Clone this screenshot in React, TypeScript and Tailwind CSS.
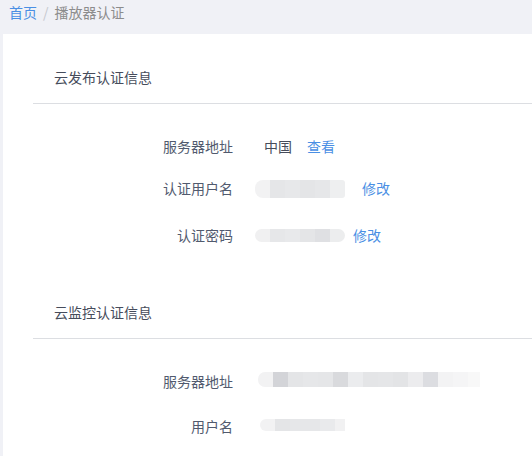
import React from "react";

const font = { fontFamily: '"Noto Sans CJK SC", "Noto Sans", sans-serif' };

function Blur({ blocks, h, round }: { blocks: string[]; h: string; round: string }) {
    return (
        <div className={`flex overflow-hidden ${h} ${round}`}>
            {blocks.map((c, i) => (
                <div key={i} className="w-[15px] h-full shrink-0" style={{ background: c }} />
            ))}
        </div>
    );
}

function Row({ label, mt, children }: { label: string; mt: string; children: React.ReactNode }) {
    return (
        <div className={`flex items-center h-[34px] ${mt}`}>
            <div className="w-[200px] text-right text-[#515a6e]">{label}</div>
            {children}
        </div>
    );
}

export default function App() {
    return (
        <div className="w-[532px] h-[456px] overflow-hidden bg-[#f0f1f6] text-[14px]" style={font}>
            <div className="h-[24px] leading-[24px] pl-[9px] flex gap-[6px]">
                <span className="text-[#4a8fe4]">首页</span>
                <span className="text-[#c5c8ce]">/</span>
                <span className="text-[#8c8c8c]">播放器认证</span>
            </div>
            <div className="mt-[10px] ml-[3px] bg-white h-[422px] pl-[30px]">
                <div className="pt-[33px] pl-[21px] h-[53px] mb-[16px] leading-[20px] text-[#464c5b]">云发布认证信息</div>
                <div className="h-px bg-[#dcdee2]" />
                <Row label="服务器地址" mt="mt-[25px]">
                    <span className="ml-[31px] text-[#464c5b]">中国</span>
                    <span className="ml-[15px] text-[#4a8fe4]">查看</span>
                </Row>
                <Row label="认证用户名" mt="mt-[8px]">
                    <div className="ml-[22px] mt-[2px]">
                        <Blur h="h-[18px]" round="rounded-l-[8px] rounded-r-[3px]" blocks={["#f2f2f3", "#e5e6e8", "#e7e8ea", "#e4e5e7", "#e6e7e9", "#eeeff0"]} />
                    </div>
                    <span className="ml-[17px] text-[#4a8fe4]">修改</span>
                </Row>
                <Row label="认证密码" mt="mt-[13px]">
                    <div className="ml-[22px]">
                        <Blur h="h-[13px]" round="rounded-[7px]" blocks={["#f0f0f1", "#e6e7e9", "#e8e9eb", "#e4e5e7", "#dfe0e3", "#ecedee"]} />
                    </div>
                    <span className="ml-[8px] text-[#4a8fe4]">修改</span>
                </Row>
                <div className="mt-[50px] pl-[21px] h-[20px] mb-[16px] leading-[20px] text-[#464c5b]">云监控认证信息</div>
                <div className="h-px bg-[#dcdee2]" />
                <Row label="服务器地址" mt="mt-[25px]">
                    <div className="ml-[25px] mt-[-4px] w-[222px] overflow-hidden">
                        <Blur
                            h="h-[15px]"
                            round="rounded-l-[7px]"
                            blocks={["#f2f2f3", "#d3d4d8", "#e4e5e7", "#e6e7e9", "#e5e6e8", "#d9dadd", "#ebecee", "#e4e5e7", "#e5e6e8", "#e3e4e6", "#ececee", "#dcdde1", "#f3f3f4", "#f5f5f6", "#f8f8f8"]}
                        />
                    </div>
                </Row>
                <Row label="用户名" mt="mt-[11px]">
                    <div className="ml-[27px] mt-[-2px] w-[85px] overflow-hidden">
                        <Blur h="h-[12px]" round="rounded-l-[6px]" blocks={["#f2f2f3", "#e4e5e7", "#e6e7e9", "#e6e7e9", "#e9eaec", "#f1f1f2"]} />
                    </div>
                </Row>
            </div>
        </div>
    );
}
